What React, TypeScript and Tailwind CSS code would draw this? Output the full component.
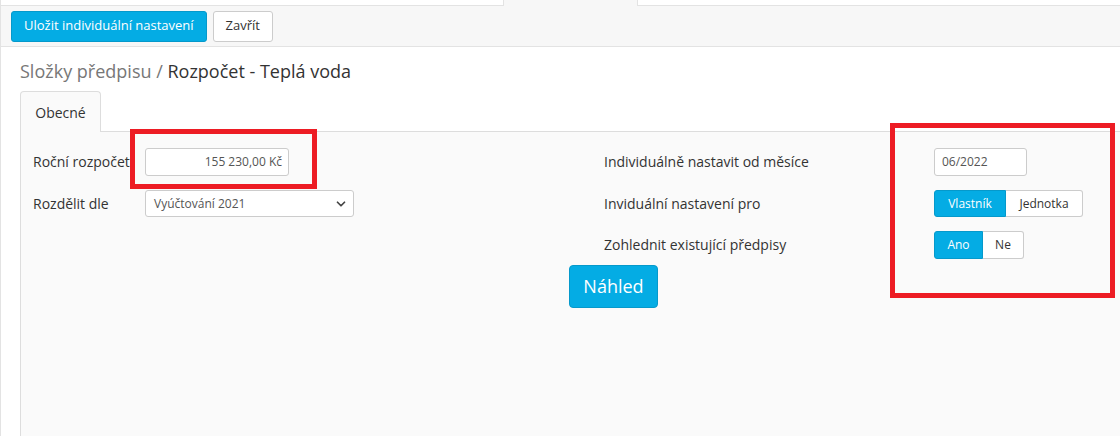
import { ChevronDown } from "lucide-react";

const font = { fontFamily: '"Open Sans", "Liberation Sans", sans-serif' };

const btnBlue =
  "bg-[#04ace4] border border-[#0599cb] text-white hover:bg-[#0399cc]";

const Label = ({ children, w }: { children: React.ReactNode; w: string }) => (
  <div className={`${w} text-[14px] text-[#333] leading-[28px] shrink-0`}>
    {children}
  </div>
);

export default function App() {
  return (
    <div
      className="relative w-[1120px] h-[436px] overflow-hidden bg-white border-l border-[#e3e3e3]"
      style={font}
    >
      {/* top tab strip */}
      <div className="flex h-[6px]">
        <div className="w-[503px] bg-white border-b border-r border-[#e3e3e3]" />
        <div className="w-[133px] bg-[#f7f7f7]" />
        <div className="flex-1 bg-white border-b border-l border-[#e3e3e3]" />
      </div>

      {/* toolbar */}
      <div className="flex items-center gap-[6px] h-[41px] px-[10px] bg-[#f7f7f7] border-b border-[#e3e3e3]">
        <button
          className={`h-[31px] px-[12px] rounded-[3px] text-[13px] ${btnBlue}`}
        >
          Uložit individuální nastavení
        </button>
        <button className="h-[31px] px-[12px] rounded-[3px] text-[13px] text-[#333] bg-white border border-[#ccc]">
          Zavřít
        </button>
      </div>

      {/* title */}
      <div className="pl-[19px] pt-[11px] h-[44px] text-[18px] leading-[26px]">
        <span className="text-[#777]">Složky předpisu / </span>
        <span className="text-[#333]">Rozpočet - Teplá voda</span>
      </div>

      {/* tabs */}
      <div className="flex ml-[19px]">
        <div className="w-[81px] h-[41px] flex items-center justify-center bg-[#fafafa] border border-b-0 border-[#ddd] rounded-t-[4px] text-[14px] text-[#333]">
          Obecné
        </div>
        <div className="flex-1 border-b border-[#ddd]" />
      </div>

      {/* panel */}
      <div className="ml-[19px] h-[400px] bg-[#fafafa] border-l border-[#ddd] pl-[12px] pt-[16px]">
        <div className="flex">
          {/* left column */}
          <div className="w-[571px] flex flex-col gap-[14px]">
            <div className="flex items-center h-[28px]">
              <Label w="w-[112px]">Roční rozpočet</Label>
              <div className="w-[144px] h-[28px] bg-white border border-[#ccc] rounded-[3px] text-[12px] text-[#555] text-right px-[6px] leading-[26px]">
                155 230,00 Kč
              </div>
            </div>
            <div className="flex items-center h-[27px]">
              <Label w="w-[112px]">Rozdělit dle</Label>
              <div className="w-[209px] h-[27px] flex items-center justify-between bg-white border border-[#ccc] rounded-[3px] text-[12px] text-[#555] pl-[8px] pr-[5px]">
                <span>Vyúčtování 2021</span>
                <ChevronDown size={14} strokeWidth={3} className="text-[#444]" />
              </div>
            </div>
          </div>

          {/* right column */}
          <div className="flex flex-col gap-[14px]">
            <div className="flex items-center h-[28px]">
              <Label w="w-[330px]">Individuálně nastavit od měsíce</Label>
              <div className="w-[93px] h-[28px] bg-white border border-[#ccc] rounded-[3px] text-[12px] text-[#555] px-[7px] leading-[26px]">
                06/2022
              </div>
            </div>
            <div className="flex items-center h-[27px]">
              <Label w="w-[330px]">Inviduální nastavení pro</Label>
              <div className="flex h-[27px] text-[12px]">
                <div className={`w-[72px] flex items-center justify-center rounded-l-[3px] ${btnBlue}`}>
                  Vlastník
                </div>
                <div className="w-[77px] flex items-center justify-center bg-white border border-l-0 border-[#ccc] rounded-r-[3px] text-[#333]">
                  Jednotka
                </div>
              </div>
            </div>
            <div className="flex items-center h-[28px]">
              <Label w="w-[330px]">Zohlednit existující předpisy</Label>
              <div className="flex h-[28px] text-[12px]">
                <div className={`w-[49px] flex items-center justify-center rounded-l-[3px] ${btnBlue}`}>
                  Ano
                </div>
                <div className="w-[41px] flex items-center justify-center bg-white border border-l-0 border-[#ccc] rounded-r-[3px] text-[#333]">
                  Ne
                </div>
              </div>
            </div>
          </div>
        </div>

        <div className="pl-[536px] mt-[6px]">
          <button className={`w-[89px] h-[43px] rounded-[4px] text-[18px] ${btnBlue}`}>
            Náhled
          </button>
        </div>
      </div>

      {/* red annotation boxes */}
      <div className="absolute left-[129px] top-[129px] w-[187px] h-[60px] border-[5px] border-[#ed1c24]" />
      <div className="absolute left-[889px] top-[123px] w-[225px] h-[175px] border-[5px] border-[#ed1c24]" />
    </div>
  );
}
